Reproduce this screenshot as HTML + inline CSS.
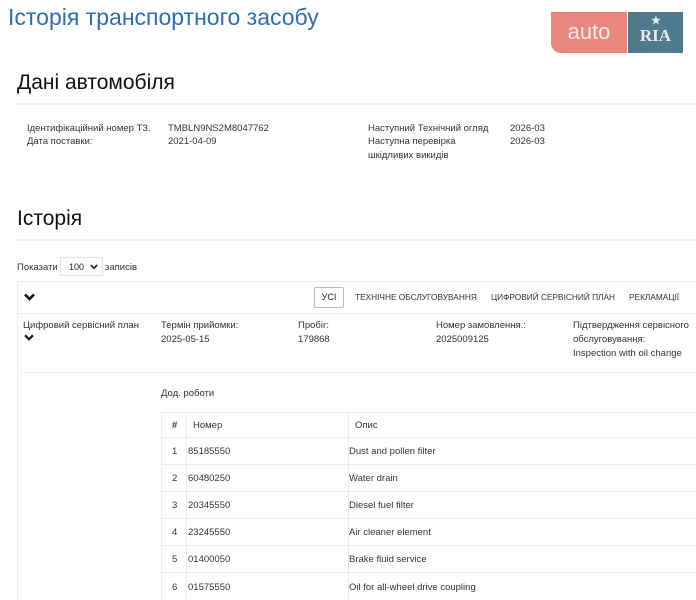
<!DOCTYPE html><html><head><meta charset="utf-8"><style>
*{margin:0;padding:0;box-sizing:border-box}
body{width:696px;height:600px;overflow:hidden;background:#fff;font-family:"Liberation Sans","DejaVu Sans",sans-serif;color:#222;position:relative}
.a{position:absolute;white-space:nowrap}
.s{font-size:9.5px;color:#333}
.h{font-size:21px;color:#111}
.ln{position:absolute;height:2px;background:#e8f2f4}
.b{position:absolute;background:#ececec}
</style></head><body>
<div class="a" style="left:8px;top:4px;font-size:23px;color:#2f6db3">Історія транспортного засобу</div>
<div class="a" style="left:551px;top:12px;width:76px;height:41px;background:#e9877e;border-bottom-left-radius:10px;color:#fde9e6;font-size:22px;text-align:center;line-height:40px">auto</div>
<div class="a" style="left:628px;top:12px;width:55px;height:41px;background:#4f7a8e;color:#e8eef0;font-family:'Liberation Serif',serif;font-weight:bold;font-size:17px;text-align:center;line-height:48px">RIA<span style="position:absolute;left:23px;top:-15px;font-size:11px">★</span></div>
<div class="a h" style="left:17px;top:71px">Дані автомобіля</div>
<div class="ln" style="left:17px;top:103px;width:679px"></div>
<div class="a s" style="left:27px;top:123px">Ідентифікаційний номер ТЗ.</div>
<div class="a s" style="left:27px;top:136px">Дата поставки:</div>
<div class="a s" style="left:168px;top:123px">TMBLN9NS2M8047762</div>
<div class="a s" style="left:168px;top:136px">2021-04-09</div>
<div class="a s" style="left:368px;top:123px">Наступний Технічний огляд</div>
<div class="a s" style="left:368px;top:136px">Наступна перевірка</div>
<div class="a s" style="left:368px;top:150px">шкідливих викидів</div>
<div class="a s" style="left:510px;top:123px">2026-03</div>
<div class="a s" style="left:510px;top:136px">2026-03</div>
<div class="a h" style="left:17px;top:207px">Історія</div>
<div class="ln" style="left:17px;top:239px;width:679px"></div>
<div class="a s" style="left:17px;top:262px">Показати</div>
<div class="a" style="left:60px;top:257px;width:43px;height:19px;border:1px solid #e2e2e2;font-size:9px;line-height:18px;padding-left:8px">100<svg style="position:absolute;right:4px;top:6px" width="8" height="6" viewBox="0 0 10 7"><path d="M1 1l4 4 4-4" stroke="#222" stroke-width="2" fill="none"/></svg></div>
<div class="a s" style="left:105px;top:262px">записів</div>
<div class="b" style="left:17px;top:281px;width:679px;height:1px"></div>
<div class="b" style="left:17px;top:281px;width:1px;height:319px"></div>
<div class="b" style="left:17px;top:313px;width:679px;height:1px"></div>
<div class="b" style="left:23px;top:372px;width:673px;height:1px"></div>
<svg class="a" style="left:24px;top:293px" width="11" height="8" viewBox="0 0 11 8"><path d="M1 1.5l4.5 4.5 4.5-4.5" stroke="#111" stroke-width="2.6" fill="none"/></svg>
<div class="a" style="left:314px;top:287px;width:30px;height:21px;border:1px solid #bbb;border-radius:2px;font-size:9px;text-align:center;line-height:19px">УСІ</div>
<div class="a s" style="left:355px;top:292px;font-size:8.3px">ТЕХНІЧНЕ ОБСЛУГОВУВАННЯ</div>
<div class="a s" style="left:491px;top:292px;font-size:8.3px">ЦИФРОВИЙ СЕРВІСНИЙ ПЛАН</div>
<div class="a s" style="left:629px;top:292px;font-size:8.3px">РЕКЛАМАЦІЇ</div>
<div class="a s" style="left:23px;top:320px">Цифровий сервісний план</div>
<svg class="a" style="left:24px;top:334px" width="10" height="7" viewBox="0 0 11 8"><path d="M1 1.5l4.5 4.5 4.5-4.5" stroke="#111" stroke-width="2.6" fill="none"/></svg>
<div class="a s" style="left:161px;top:320px">Термін прийомки:</div>
<div class="a s" style="left:161px;top:334px">2025-05-15</div>
<div class="a s" style="left:298px;top:320px">Пробіг:</div>
<div class="a s" style="left:298px;top:334px">179868</div>
<div class="a s" style="left:436px;top:320px">Номер замовлення.:</div>
<div class="a s" style="left:436px;top:334px">2025009125</div>
<div class="a s" style="left:573px;top:320px">Підтвердження сервісного</div>
<div class="a s" style="left:573px;top:334px">обслуговування:</div>
<div class="a s" style="left:573px;top:348px">Inspection with oil change</div>
<div class="a s" style="left:161px;top:388px">Дод. роботи</div>
<div class="b" style="left:161px;top:412px;width:535px;height:1px"></div>
<div class="b" style="left:161px;top:412px;width:1px;height:188px"></div>
<div class="b" style="left:186px;top:412px;width:1px;height:188px"></div>
<div class="b" style="left:348px;top:412px;width:1px;height:188px"></div>
<div class="b" style="left:161px;top:437px;width:535px;height:1px"></div>
<div class="b" style="left:161px;top:464px;width:535px;height:1px"></div>
<div class="b" style="left:161px;top:491px;width:535px;height:1px"></div>
<div class="b" style="left:161px;top:518px;width:535px;height:1px"></div>
<div class="b" style="left:161px;top:545px;width:535px;height:1px"></div>
<div class="b" style="left:161px;top:572px;width:535px;height:1px"></div>
<div class="a s" style="left:172px;top:420px;font-weight:bold">#</div>
<div class="a s" style="left:193px;top:420px">Номер</div>
<div class="a s" style="left:355px;top:420px">Опис</div>
<div class="a s" style="left:172px;top:446px">1</div><div class="a s" style="left:188px;top:446px">85185550</div><div class="a s" style="left:349px;top:446px">Dust and pollen filter</div>
<div class="a s" style="left:172px;top:473px">2</div><div class="a s" style="left:188px;top:473px">60480250</div><div class="a s" style="left:349px;top:473px">Water drain</div>
<div class="a s" style="left:172px;top:500px">3</div><div class="a s" style="left:188px;top:500px">20345550</div><div class="a s" style="left:349px;top:500px">Diesel fuel filter</div>
<div class="a s" style="left:172px;top:527px">4</div><div class="a s" style="left:188px;top:527px">23245550</div><div class="a s" style="left:349px;top:527px">Air cleaner element</div>
<div class="a s" style="left:172px;top:554px">5</div><div class="a s" style="left:188px;top:554px">01400050</div><div class="a s" style="left:349px;top:554px">Brake fluid service</div>
<div class="a s" style="left:172px;top:582px">6</div><div class="a s" style="left:188px;top:582px">01575550</div><div class="a s" style="left:349px;top:582px">Oil for all-wheel drive coupling</div>
</body></html>
